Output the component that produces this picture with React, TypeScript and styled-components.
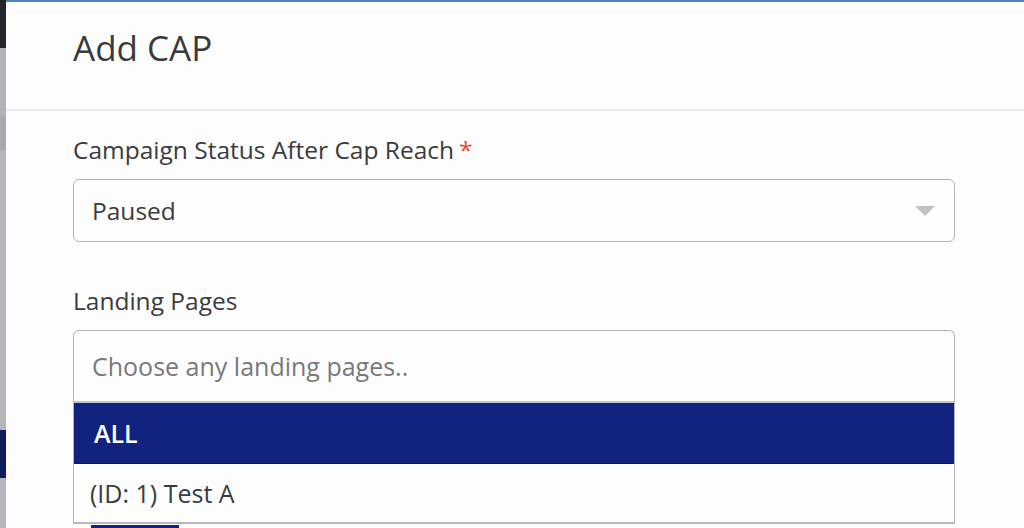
import React from 'react';
import styled, { createGlobalStyle } from 'styled-components';

const GlobalStyle = createGlobalStyle`
  html, body {
    margin: 0;
    padding: 0;
    background: #b5b5b9;
    font-family: 'Open Sans', 'Noto Sans', sans-serif;
    overflow: hidden;
  }
`;

const Page = styled.div`
  display: flex;
  height: 528px;
  overflow: hidden;
`;

// page behind the dimmed backdrop, only a thin strip shows at the left
const Backdrop = styled.aside`
  width: 6px;
  flex: none;
  display: flex;
  flex-direction: column;
`;
const BackdropBlock = styled.div<{ $h: number; $color: string }>`
  height: ${(p) => p.$h}px;
  flex: none;
  background: ${(p) => p.$color};
`;

const Modal = styled.section`
  flex: 1;
  background: #fdfdfd;
  border-top: 2px solid #4c85bf;
  display: flex;
  flex-direction: column;
  overflow: hidden;
`;

const Header = styled.header`
  flex: none;
  height: 109px;
  border-bottom: 2px solid #ececee;
  padding: 0 67px;
  display: flex;
  align-items: center;
  box-sizing: border-box;
`;

const Title = styled.h2`
  margin: 0 0 16px;
  font-size: 35px;
  font-weight: 400;
  color: #3a3a3c;
`;

const Body = styled.div`
  flex: none;
  padding: 24px 67px 0;
  width: 882px;
`;

const Field = styled.div`
  display: flex;
  flex-direction: column;
  margin-bottom: 44px;
`;

const Label = styled.label`
  font-size: 24.5px;
  color: #3b3b3d;
  margin-bottom: 14px;
  line-height: 30px;
`;

const Required = styled.span`
  color: #e8462a;
  margin-left: 5px;
`;

const Select = styled.div`
  height: 63px;
  border: 1px solid #b4b4b8;
  border-radius: 6px;
  box-sizing: border-box;
  display: flex;
  align-items: center;
  justify-content: space-between;
  padding: 0 19px 0 18px;
  font-size: 24.5px;
  color: #3b3b3d;
`;

const Caret = styled.span`
  width: 0;
  height: 0;
  border-left: 10px solid transparent;
  border-right: 10px solid transparent;
  border-top: 10px solid #c2c2c6;
`;

const Combo = styled.div`
  display: flex;
  flex-direction: column;
`;

const SearchBox = styled.div`
  height: 73px;
  border: 1px solid #b4b4b8;
  border-bottom: 2px solid #c4c4c8;
  border-radius: 6px 6px 0 0;
  box-sizing: border-box;
  display: flex;
  align-items: center;
  padding: 0 18px;
  font-size: 25px;
  color: #79797c;
`;

const Menu = styled.ul`
  list-style: none;
  margin: 0;
  padding: 0;
  border: 1px solid #b4b4b8;
  border-top: none;
  border-bottom: 2px solid #b9b9bd;
`;

const Option = styled.li<{ $active?: boolean }>`
  height: 60px;
  display: flex;
  align-items: center;
  padding: 0 20px 0 16px;
  font-size: 25px;
  background: ${(p) => (p.$active ? '#11227f' : '#fdfdfd')};
  color: ${(p) => (p.$active ? '#ffffff' : '#3b3b3d')};
  font-weight: ${(p) => (p.$active ? 600 : 400)};
  border-bottom: ${(p) => (p.$active ? '1px solid #0b1660' : 'none')};
  &:first-child {
    padding-left: 20px;
  }
  &:last-child {
    height: 58px;
  }
`;

const Chip = styled.span`
  margin: 1px 0 0 18px;
  width: 88px;
  height: 20px;
  background: #11227f;
`;

export default function App() {
  return (
    <>
      <GlobalStyle />
      <Page>
        <Backdrop>
          <BackdropBlock $h={48} $color="#25272c" />
          <BackdropBlock $h={68} $color="#b4b4b8" />
          <BackdropBlock $h={34} $color="#a9a9ad" />
          <BackdropBlock $h={280} $color="#b6b6ba" />
          <BackdropBlock $h={48} $color="#0f1c5c" />
          <BackdropBlock $h={50} $color="#b6b6ba" />
        </Backdrop>
        <Modal>
          <Header>
            <Title>Add CAP</Title>
          </Header>
          <Body>
            <Field>
              <Label>
                Campaign Status After Cap Reach<Required>*</Required>
              </Label>
              <Select>
                Paused
                <Caret />
              </Select>
            </Field>
            <Field>
              <Label>Landing Pages</Label>
              <Combo>
                <SearchBox>Choose any landing pages..</SearchBox>
                <Menu>
                  <Option $active>ALL</Option>
                  <Option>(ID: 1) Test A</Option>
                </Menu>
                <Chip />
              </Combo>
            </Field>
          </Body>
        </Modal>
      </Page>
    </>
  );
}
